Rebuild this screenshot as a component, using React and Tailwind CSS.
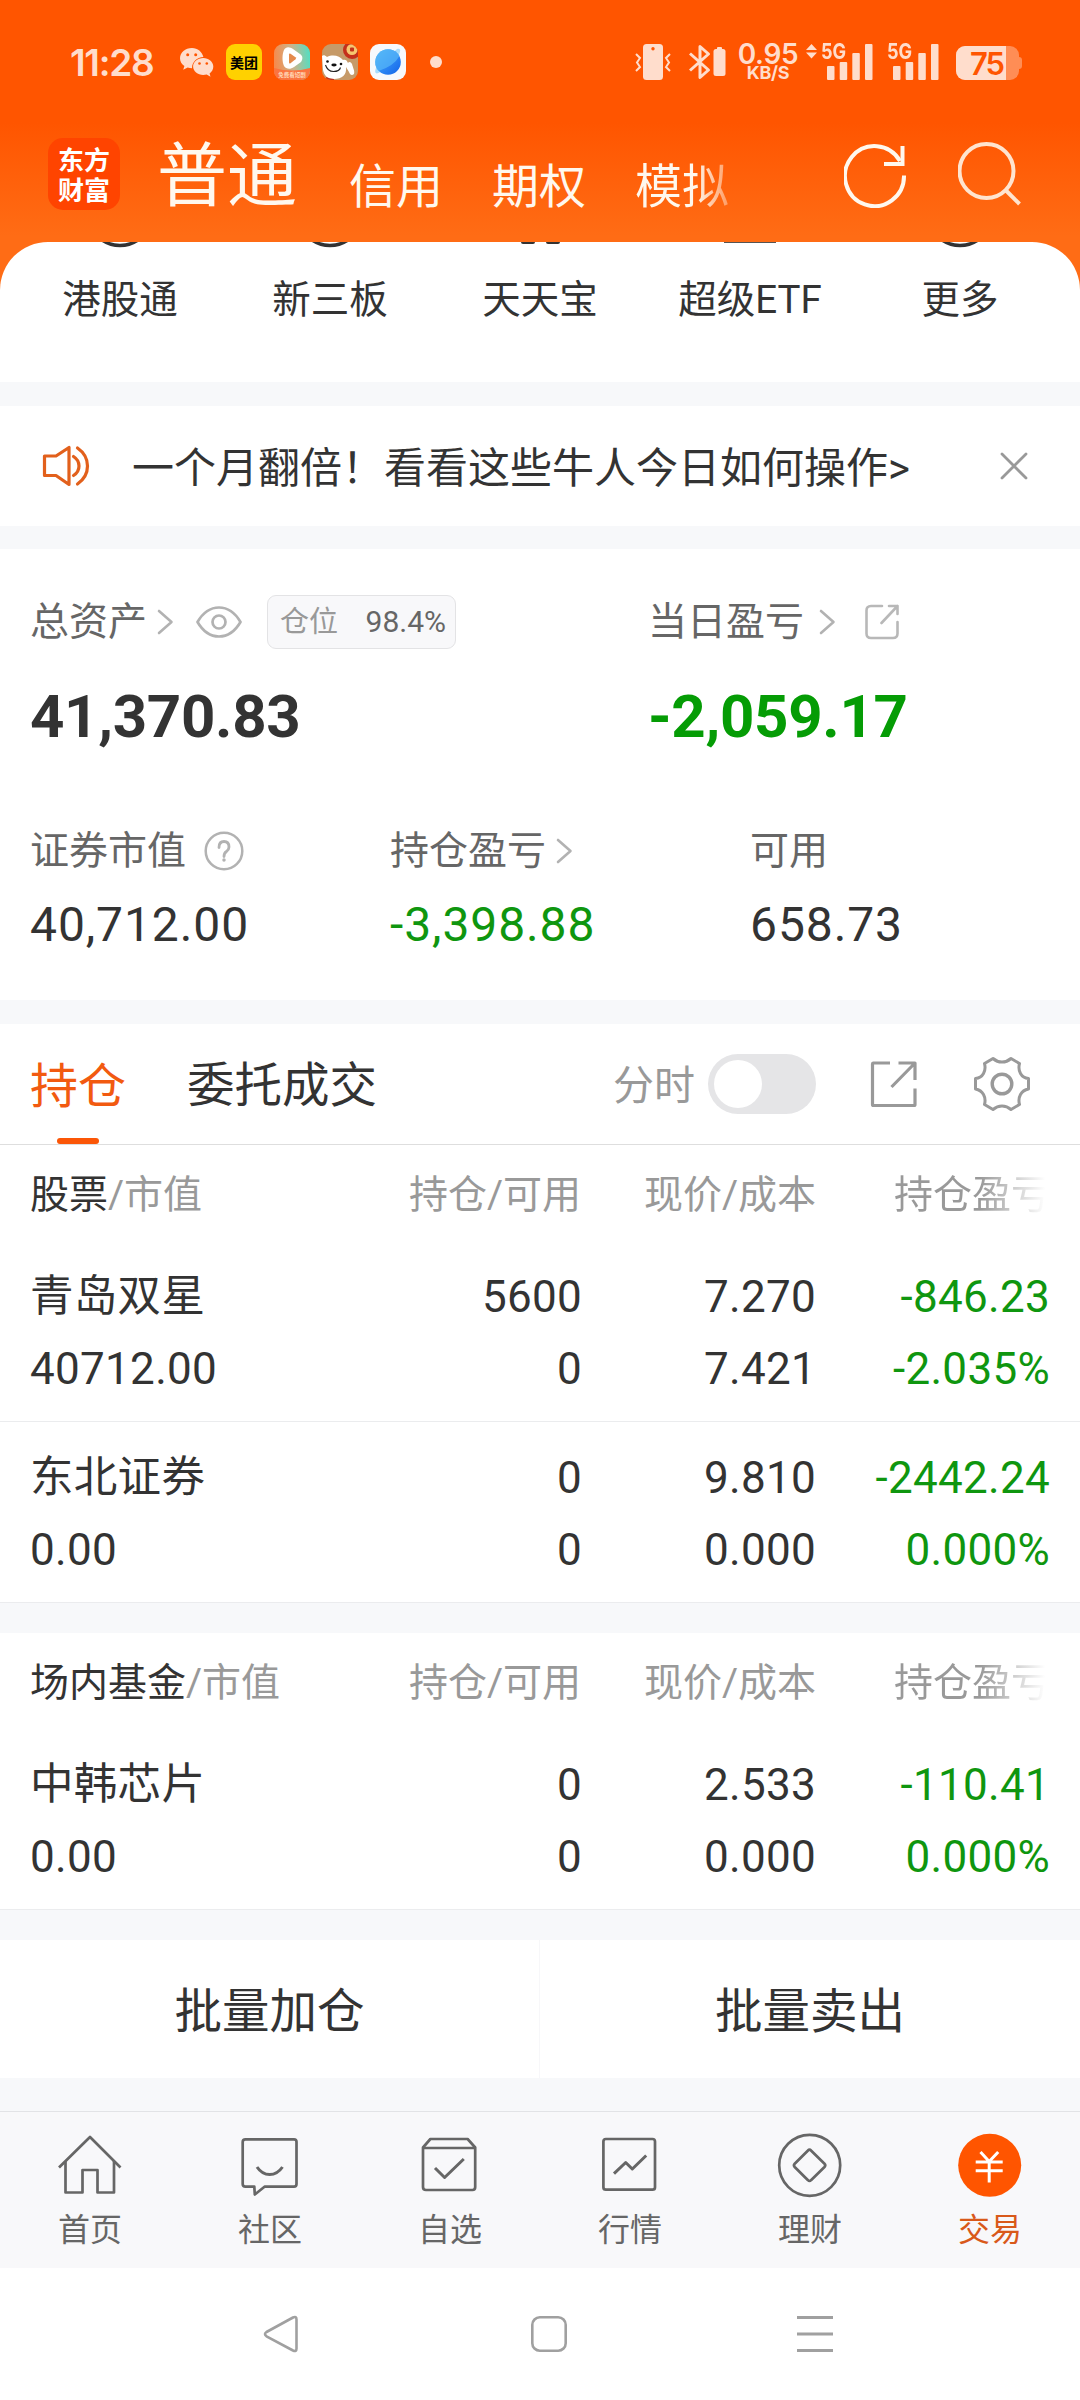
import React from "react";

const FONT = "font-[Roboto,'Noto_Sans_CJK_SC',sans-serif]";

function Chevron({ className = "" }) {
  return (
    <svg width="17" height="28" viewBox="0 0 17 28" className={className} fill="none" stroke="#b2b2b2" strokeWidth="2.6" strokeLinecap="round" strokeLinejoin="round">
      <path d="M2 3 14.5 14 2 25" />
    </svg>
  );
}

function Signal() {
  return (
    <svg width="46" height="36" viewBox="0 0 46 36" fill="#ffddcc">
      <rect x="0" y="22" width="7.5" height="14" rx="1" />
      <rect x="12.7" y="18" width="7.5" height="18" rx="1" />
      <rect x="25.3" y="9" width="7.5" height="27" rx="1" />
      <rect x="38" y="0" width="7.5" height="36" rx="1" />
    </svg>
  );
}

function StatusBar() {
  return (
    <div className="flex h-[124px] items-center pl-[70px] text-[#ffddcc]">
      <div className="w-[110px] font-[Inter,sans-serif] text-[37px] font-semibold leading-none tracking-[-1.3px]">11:28</div>
      <svg width="34" height="30" viewBox="0 0 34 30" fill="#ffddcc" className="mt-[2px]">
        <path d="M12 0C5.2 0 0 4.600 0 10.200c0 3.300 1.700 6 4.400 7.900l-1.200 3.700 4.500-2.300c1.300.4 2.700.7 4.300.7C12 14 17 9.300 23.400 9.100 22.300 3.800 17.600 0 12 0z" />
        <path d="M33.300 18.500c0-4.800-4.600-8.500-10.100-8.500s-10.100 3.700-10.100 8.500S17.700 27 23.200 27c1.200 0 2.400-.2 3.500-.5l3.800 2.300-.9-3.400c2.300-1.600 3.700-4 3.700-6.900z" />
        <g fill="#ff5500"><circle cx="7.700" cy="6.800" r="1.500" /><circle cx="15.700" cy="6.800" r="1.500" /><circle cx="19.500" cy="15.500" r="1.300" /><circle cx="26.800" cy="15.500" r="1.300" /></g>
      </svg>
      <div className="ml-[12px] flex h-9 w-9 items-center justify-center rounded-[9px] bg-[#ffd100] font-['Noto_Sans_CJK_SC',sans-serif] text-[14px] font-bold leading-none text-black">美团</div>
      <svg width="36" height="36" viewBox="0 0 36 36" className="ml-3 rounded-[9px]">
        <defs>
          <linearGradient id="playBg" x1="0" y1="0.2" x2="1" y2="0.1"><stop offset="0" stopColor="#f58b4e" /><stop offset="0.5" stopColor="#c9b58c" /><stop offset="1" stopColor="#4fe0c4" /></linearGradient>
        </defs>
        <rect width="36" height="36" fill="url(#playBg)" />
        <path d="M0 24Q18 29 36 24V36H0z" fill="#fb7440" />
        <path d="M10 6c2-4 6-3 9-1l7 5c3 2 3 5 1 8l-7 5c-4 3-8 2-10-1-2-4-2-12 0-16z" fill="#fff" />
        <path d="M15 10.500q0-1.500 1.500-.8l5 3.500q1.200 1 0 2l-5 4q-1.500.8-1.500-1z" fill="#e58a4c" />
        <text x="18" y="33" textAnchor="middle" fontSize="5.500" fontWeight="700" fill="#ffd9b8" fontFamily="Noto Sans CJK SC">免费看短剧</text>
      </svg>
      <svg width="36" height="36" viewBox="0 0 36 36" className="ml-3 rounded-[9px]">
        <rect width="36" height="36" fill="#c69a68" />
        <circle cx="30" cy="6" r="9" fill="#c4301c" />
        <circle cx="30" cy="5.500" r="5.500" fill="#f6c66f" />
        <rect x="28" y="3.500" width="4" height="4" rx="1" fill="#c4301c" />
        <path d="M0 12c1-1 3-1 5 1 6-3 13-1 16 3 2-1 4 0 5 3 1-2 3-1 4 1 1 4 3 7 2 10-2 2-4 1-5-2l-3-5c1 8-4 12-12 12C5 35 2 31 1 26z" fill="#fff" />
        <path d="M3.500 21q2 6.500 8 6.500 6 0 7-4" fill="none" stroke="#222" strokeWidth="1.100" />
        <ellipse cx="12" cy="21" rx="2.700" ry="1.400" fill="#111" /><circle cx="5.500" cy="17.500" r="1.300" fill="#111" /><circle cx="19" cy="20" r="1.300" fill="#111" />
        <path d="M4 33q4 2 8 2v1H4z" fill="#c4301c" />
      </svg>
      <svg width="36" height="36" viewBox="0 0 36 36" className="ml-3 rounded-[9px]">
        <defs><linearGradient id="planet" x1="0" y1="0" x2="1" y2="1"><stop offset="0" stopColor="#5cc4f8" /><stop offset="0.500" stopColor="#2f8bf5" /><stop offset="1" stopColor="#1263e8" /></linearGradient></defs>
        <rect width="36" height="36" fill="#f7f9fc" />
        <path d="M27 5c4-1 4 2 1 7L10 28c-4 3-6 1-4-4z" fill="#a8dcfb" />
        <circle cx="18" cy="18" r="12.800" fill="url(#planet)" />
        <path d="M29.500 12Q24 22 8.500 27 5.300 23.500 5.300 18A12.800 12.800 0 0 1 18 5.200c5 0 9.500 2.500 11.500 6.800z" fill="#54b4f7" opacity=".75" />
      </svg>
      <div className="ml-6 h-3 w-3 rounded-full bg-[#ffddcc]" />

      <svg width="36" height="36" viewBox="0 0 36 36" className="ml-[193px]">
        <rect x="8" y="0" width="20" height="36" rx="3.500" fill="#ffddcc" />
        <circle cx="18" cy="4.700" r="1.700" fill="#ff5500" />
        <path d="M1 10l4 4-3 4.500L5 23l-4 4M35 10l-4 4 3 4.500L31 23l4 4" fill="none" stroke="#ffddcc" strokeWidth="2" />
      </svg>
      <svg width="37" height="36" viewBox="0 0 37 36" className="ml-[18px]">
        <path d="M1 9.500 19.500 26 11 33.500V2.500L19.500 10 1 26.500" fill="none" stroke="#ffddcc" strokeWidth="3" strokeLinejoin="round" />
        <rect x="24.500" y="5" width="12" height="27" rx="2.500" fill="#ffddcc" /><rect x="28" y="3" width="5" height="4" rx="1" fill="#ffddcc" />
      </svg>
      <div className="ml-[12px] flex w-[60px] flex-col items-center font-[Inter,sans-serif]">
        <span className="text-[28px] font-semibold leading-[22px] tracking-[-0.3px]">0.95</span>
        <span className="text-[18px] font-bold leading-[16px] tracking-[-0.3px]">KB/S</span>
      </div>
      <svg width="11" height="36" viewBox="0 0 11 36" className="ml-[8px]" fill="#ffddcc"><path d="M5.500 0 11 6H0zM0 8.500H11L5.500 14.500z" /></svg>
      <div className="relative ml-[10px] h-9 w-[46px]">
        <span className="absolute -left-[6px] -top-[3px] origin-left scale-x-[.82] font-[Inter,sans-serif] text-[22px] font-bold leading-[20px]">5G</span>
        <Signal />
      </div>
      <div className="relative ml-[20px] h-9 w-[46px]">
        <span className="absolute -left-[6px] -top-[3px] origin-left scale-x-[.82] font-[Inter,sans-serif] text-[22px] font-bold leading-[20px]">5G</span>
        <Signal />
      </div>
      <div className="ml-[17px] mt-[2px] flex items-center">
        <div className="flex h-[34px] w-[63px] overflow-hidden rounded-[9px] bg-[#ff8d55]">
          <div className="flex w-[50px] items-center justify-end bg-[#ffddcc] pr-[3px] font-[Inter,sans-serif] text-[31px] font-semibold leading-none tracking-[-2px] text-[#ff5500]">75</div>
        </div>
        <div className="h-3 w-[3px] rounded-r-sm bg-[#ff8d55]" />
      </div>
    </div>
  );
}

function TopNav() {
  return (
    <div className="flex h-[118px] text-[#fff8ee]">
      <div className="ml-12 mt-[14px] flex h-[72px] w-[72px] flex-col items-center justify-center rounded-[15px] bg-[#ff4400] font-['Noto_Sans_CJK_SC',sans-serif] text-[26px] font-bold leading-[30px] text-white">
        <span>东方</span>
        <span>财富</span>
      </div>
      <div className="ml-[37px] mt-[9px] w-[142px] text-[70px] leading-[88px]">普通</div>
      <div className="ml-[50px] mt-[31px] flex w-[384px] gap-[49px] text-[47px] leading-[64px]">
        <span>信用</span>
        <span>期权</span>
        <span className="bg-[linear-gradient(90deg,#fff8ee_64%,#ff9a60_100%)] bg-clip-text text-transparent">模拟</span>
      </div>
      <svg width="64" height="66" viewBox="0 0 64 66" className="ml-[111px] mt-[18px]" fill="none" stroke="#fff8ee" strokeWidth="4">
        <path d="M60 33.500A29.500 30 0 1 1 56 19" />
        <path d="M58.500 4V22H40" />
      </svg>
      <svg width="66" height="66" viewBox="0 0 66 66" className="ml-[50px] mt-[17px]" fill="none" stroke="#ffe4cf" strokeWidth="4">
        <circle cx="28.500" cy="30" r="27" />
        <path d="M47.500 49 61.500 63" />
      </svg>
    </div>
  );
}

function Shortcuts() {
  const arc = (
    <svg width="48" height="6" viewBox="0 0 48 6" fill="none" stroke="#333" strokeWidth="3.500"><circle cx="24" cy="-28" r="31.500" /></svg>
  );
  const items = [
    ["港股通", arc],
    ["新三板", arc],
    ["天天宝", <div className="flex gap-[11px]"><div className="h-[2px] w-[14px] rounded-b bg-[#333]" /><div className="h-[2px] w-[14px] rounded-b bg-[#333]" /></div>],
    ["超级ETF", <div className="h-px w-[52px] bg-[#555]" />],
    ["更多", arc],
  ];
  return (
    <div className="bg-[#ff6c15]">
      <div className="grid h-[140px] grid-cols-5 rounded-t-[48px] bg-white px-[15px] text-[38.500px] leading-[56px] text-[#333]">
        {items.map(([t, ic]) => (
          <div key={t} className="flex flex-col items-center">
            <div className="flex h-[30px] items-start">{ic}</div>
            <span>{t}</span>
          </div>
        ))}
      </div>
    </div>
  );
}

function Notice() {
  return (
    <div className="mt-6 flex h-[120px] items-center bg-white">
      <svg width="48" height="44" viewBox="0 0 48 44" className="ml-[42px]" fill="none" stroke="#e2601c" strokeWidth="3.200" strokeLinejoin="round" strokeLinecap="round">
        <path d="M2.500 12H14L27 3.500V40.500L14 31.500H2.500z" />
        <path d="M31.500 12.500Q37 16 37 22T31.500 31.500M35.500 4Q45.500 11 45.500 22T35.500 40" />
      </svg>
      <span className="ml-[42px] mt-[5px] text-[42px] leading-[60px] text-[#333]">一个月翻倍！看看这些牛人今日如何操作&gt;</span>
      <svg width="28" height="28" viewBox="0 0 28 28" className="ml-auto mr-[52px]" stroke="#999" strokeWidth="2.800" strokeLinecap="round"><path d="M2 2 26 26M26 2 2 26" /></svg>
    </div>
  );
}

function Assets() {
  return (
    <div className="mt-[23px] h-[451px] bg-white pl-[30px] pt-[45px] text-[39px] text-[#666]">
      <div className="flex h-[56px] items-center">
        <div className="flex w-[618px] items-center">
          <span>总资产</span>
          <Chevron className="ml-[10px]" />
          <svg width="46" height="32" viewBox="0 0 46 32" className="ml-[22px]" fill="none" stroke="#b2b2b2" strokeWidth="2.700"><path d="M1.500 16Q10 1.500 23 1.500T44.500 16Q36 30.500 23 30.500T1.500 16z" strokeLinejoin="round" /><circle cx="23" cy="16" r="6.500" /></svg>
          <div className="ml-[25px] flex h-[54px] w-[189px] items-center justify-between rounded-[9px] border border-[#e3e3e5] bg-[#f8f8fa] pl-[12px] pr-[9px] text-[29px] leading-none">
            <span className="text-[#999]">仓位</span>
            <span className="text-[30px]">98.4%</span>
          </div>
        </div>
        <span>当日盈亏</span>
        <Chevron className="ml-[15px]" />
        <svg width="34" height="36" viewBox="0 0 34 36" className="ml-[29px]" fill="none" stroke="#b8b8b8" strokeWidth="2.600" strokeLinecap="round" strokeLinejoin="round">
          <path d="M17 2H6Q1.500 2 1.500 6.500V29.500Q1.500 34 6 34H28Q32.500 34 32.500 29.500V18" /><path d="M24 2H32.500V10M32.500 2 16.500 19" />
        </svg>
      </div>
      <div className="mt-[32px] flex h-[70px] items-center text-[60px] font-bold leading-[70px] tracking-[-0.300px]">
        <span className="w-[618px] text-[#333]">41,370.83</span>
        <span className="text-[#059c05]">-2,059.17</span>
      </div>
      <div className="mt-[71px] flex">
        <div className="w-[360px]">
          <div className="flex h-[56px] items-center">证券市值
            <svg width="40" height="40" viewBox="0 0 40 40" className="ml-[18px]" fill="none" stroke="#b2b2b2" strokeWidth="2.500"><circle cx="20" cy="20" r="18.300" /><path d="M15 16.500Q15 10.500 20 10.500T25 16Q25 18.500 22.500 20.500 20 22 20 25.500" strokeWidth="2.800" strokeLinecap="round" /><circle cx="20" cy="29" r="1" fill="#b2b2b2" stroke="#b2b2b2" strokeWidth="1.500" /></svg>
          </div>
          <div className="mt-[16px] text-[48px] leading-[60px] tracking-[0.900px] text-[#333]">40,712.00</div>
        </div>
        <div className="w-[360px]">
          <div className="flex h-[56px] items-center">持仓盈亏<Chevron className="ml-[10px]" /></div>
          <div className="mt-[16px] text-[48px] leading-[60px] tracking-[0.900px] text-[#0f960f]">-3,398.88</div>
        </div>
        <div>
          <div className="flex h-[56px] items-center">可用</div>
          <div className="mt-[16px] text-[48px] leading-[60px] tracking-[0.900px] text-[#333]">658.73</div>
        </div>
      </div>
    </div>
  );
}

function HoldingsTabs() {
  return (
    <div className="mt-6 flex h-[121px] items-center border-b border-[#dedede] bg-white pl-[30px] text-[48px] text-[#333]">
      <div className="relative flex h-[120px] items-center pt-[5px] text-[#f25a10]">持仓
        <div className="absolute bottom-0 left-[27px] h-[6px] w-[42px] rounded-[3px] bg-[#fb5607]" />
      </div>
      <span className="ml-[61px] pt-[5px] text-[47.500px]">委托成交</span>
      <span className="ml-auto pt-[5px] text-[41px] text-[#999]">分时</span>
      <div className="ml-[13px] flex h-[60px] w-[108px] items-center rounded-full bg-[#e5e5e7] pl-[6px]"><div className="h-12 w-12 rounded-full bg-white" /></div>
      <svg width="48" height="48" viewBox="0 0 48 48" className="ml-[54px]" fill="none" stroke="#999" strokeWidth="3.200" strokeLinejoin="round">
        <path d="M20 3H3Q2.500 3 2.500 4V44.500Q2.500 45.500 3.500 45.500H44Q45 45.500 45 44.500V28.500" /><path d="M28.500 3H45V20M45 3 21.500 27" />
      </svg>
      <svg width="56" height="56" viewBox="0 0 56 56" className="ml-[56px] mr-[50px]" fill="none" stroke="#999" strokeWidth="3" strokeLinejoin="round">
        <path d="M19 2.500Q23 6 28 6T37 2.500L45.500 7.500Q44 13 46.500 17.500T54.500 22.500V33Q49 34 46.500 38.500T45.500 48.500L37 53.500Q33 50 28 50T19 53.500L10.500 48.500Q12 43 9.500 38.500T1.500 33V22.500Q7 22 9.500 17.500T10.500 7.500z" />
        <circle cx="28" cy="28" r="9.800" strokeWidth="3.400" />
      </svg>
    </div>
  );
}

const COLS = "grid grid-cols-[322px_229px_235px_234px] pl-[30px]";

function TableHead({ title }) {
  return (
    <div className={COLS + " h-[96px] items-center pt-[4px] text-right text-[39px] text-[#999]"}>
      <div className="text-left"><span className="text-[#333]">{title}</span>/市值</div>
      <div>持仓/可用</div>
      <div>现价/成本</div>
      <div className="bg-[linear-gradient(90deg,#999_70%,#fff_98%)] bg-clip-text text-transparent">持仓盈亏</div>
    </div>
  );
}

function Row({ cells }) {
  return (
    <div className={COLS + " h-[181px] border-b border-[#ebecee] pt-[20px] text-right text-[44px] leading-[72px] tracking-[0.300px] text-[#333]"}>
      {cells.map(([a, b], i) => (
        <div key={i} className={i === 0 ? "text-left" : i === 1 ? "-mr-px" : i === 3 ? "text-[#0f960f]" : ""}>
          <div className={i === 0 ? "text-[43.500px]" : ""}>{a}</div>
          <div>{b}</div>
        </div>
      ))}
    </div>
  );
}

const ICONS = {
  首页: <><path d="M1 34.500 32 4 62.500 34.500" /><path d="M7.500 28V59.500H24.500V37H39.500V59.500H56V28" /></>,
  社区: <><path d="M7.500 6.300H56Q58.500 6.300 58.500 8.800V51Q58.500 53.700 56 53.700H26.500L16.800 61.500 16.300 53.700H7.500Q4.700 53.700 4.700 51V9Q4.700 6.300 7.500 6.300z" /><path d="M19 34Q24 41.500 31.700 41.500T44.500 34" strokeWidth="3" /></>,
  自选: <><path d="M12.400 6H49.600L57.200 14.500V54Q57.200 57 54.500 57H8Q5 57 5 54V14.500z" /><path d="M5 15H57" /><path d="M17 35 26.600 44.500 45.800 26" strokeWidth="3" /></>,
  行情: <><rect x="5.400" y="6" width="51.600" height="50.700" rx="2.500" /><path d="M16 40.700 27.700 29.500 34.300 36 48.200 22.500" strokeWidth="3" /></>,
  理财: <><circle cx="31.700" cy="32.300" r="30.500" /><path d="M30 17.500Q31.500 15.800 33 17.500L46.500 30.700Q48 32.300 46.500 34L33 47.200Q31.500 48.800 30 47.200L16.700 34Q15.200 32.300 16.700 30.700z" /></>,
  交易: <><circle cx="31.700" cy="32.300" r="31.500" fill="#ff5500" stroke="none" /><path d="M22.500 19 31.200 28.500 40.200 19M31.200 28V49.500M17.700 29H44.700M17.700 37.800H44.700" stroke="#fff" strokeWidth="3" /></>,
};

export default function App() {
  return (
    <div className={FONT + " h-[2400px] w-[1080px] overflow-hidden bg-[#f7f8fa] whitespace-nowrap"}>
      <div className="bg-[linear-gradient(180deg,#ff5500_0,#ff5500_122px,#ff6c15_236px)]">
        <StatusBar />
        <TopNav />
      </div>
      <Shortcuts />
      <Notice />
      <Assets />
      <HoldingsTabs />
      <div className="bg-white">
        <TableHead title="股票" />
        <Row cells={[["青岛双星", "40712.00"], ["5600", "0"], ["7.270", "7.421"], ["-846.23", "-2.035%"]]} />
        <Row cells={[["东北证券", "0.00"], ["0", "0"], ["9.810", "0.000"], ["-2442.24", "0.000%"]]} />
      </div>
      <div className="mt-[30px] bg-white">
        <TableHead title="场内基金" />
        <Row cells={[["中韩芯片", "0.00"], ["0", "0"], ["2.533", "0.000"], ["-110.41", "0.000%"]]} />
      </div>
      <div className="mt-[30px] grid h-[138px] grid-cols-2 items-center bg-white text-center text-[47.500px] text-[#333]">
        <div className="h-[138px] border-r border-[#f7f7f9] pt-[4px] leading-[136px]">批量加仓</div>
        <div className="h-[138px] pt-[4px] leading-[136px]">批量卖出</div>
      </div>
      <div className="mt-[33px] grid h-[157px] grid-cols-6 border-t border-[#e2e3e6] bg-[#f8f8fa]">
        {Object.entries(ICONS).map(([t, ic]) => (
          <div key={t} className={"flex flex-col items-center pt-[21px] text-[32px] leading-[44px] " + (t === "交易" ? "text-[#d9591a]" : "text-[#666]")}>
            <svg width="64" height="64" viewBox="0 0 64 64" className="overflow-visible" fill="none" stroke="#666" strokeWidth="2.700" strokeLinejoin="round">{ic}</svg>
            <span className="mt-[11px]">{t}</span>
          </div>
        ))}
      </div>
      <div className="flex h-[132px] items-center bg-white">
        <svg width="36" height="38" viewBox="0 0 36 38" className="ml-[263px]" fill="none" stroke="#a0a0a0" strokeWidth="2.600" strokeLinejoin="round"><path d="M30 2.500Q33.500 1 33.500 4.500V33.500Q33.500 37 30 35.500L3.500 21.300Q0.500 19 3.500 17z" /></svg>
        <svg width="36" height="36" viewBox="0 0 36 36" className="ml-[232px]" fill="none" stroke="#a0a0a0" strokeWidth="2.600"><rect x="1.300" y="1.300" width="33.400" height="33.400" rx="7.500" /></svg>
        <svg width="36" height="36" viewBox="0 0 36 36" className="ml-[230px]" stroke="#a0a0a0" strokeWidth="3"><path d="M0 1.500H36M0 18H36M0 34.500H36" /></svg>
      </div>
    </div>
  );
}
